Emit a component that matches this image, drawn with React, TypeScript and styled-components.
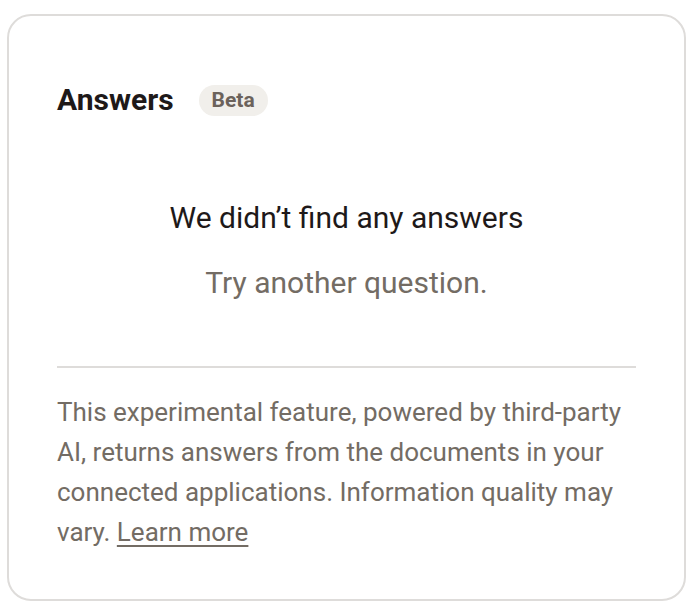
import React from "react";
import styled, { createGlobalStyle } from "styled-components";

const Global = createGlobalStyle`
  html, body { margin: 0; padding: 0; background: #fff; }
  body { font-family: Roboto, "Liberation Sans", sans-serif; -webkit-font-smoothing: antialiased; }
  * { box-sizing: border-box; }
`;

const Page = styled.div`
  padding: 14px 10px 1px 7px;
`;

const Card = styled.section`
  width: 679px;
  height: 587px;
  border: 2px solid #dedcda;
  border-radius: 24px;
  padding: 66px 48px 0 48px;
  display: flex;
  flex-direction: column;
`;

const Header = styled.div`
  display: flex;
  align-items: center;
  gap: 25px;
`;

const Title = styled.h2`
  margin: 0;
  font-size: 30px;
  font-weight: 700;
  color: #1e1919;
  line-height: 36px;
`;

const Badge = styled.span`
  display: inline-flex;
  align-items: center;
  height: 31px;
  padding: 0 13px;
  border-radius: 16px;
  background: #f1efeb;
  color: #6b625b;
  font-size: 21px;
  font-weight: 700;
`;

const Empty = styled.div`
  display: flex;
  flex-direction: column;
  align-items: center;
  margin-top: 82px;
  gap: 29px;
`;

const EmptyTitle = styled.div`
  font-size: 30px;
  color: #1e1919;
  line-height: 36px;
`;

const EmptySub = styled.div`
  font-size: 30px;
  color: #736c64;
  line-height: 36px;
`;

const Divider = styled.hr`
  margin: 65px 0 0 0;
  border: none;
  border-top: 2px solid #dedcda;
`;

const Note = styled.p`
  margin: 24px 0 0 0;
  font-size: 26px;
  line-height: 40px;
  color: #736c64;
`;

const Link = styled.a`
  color: #736c64;
  text-decoration: underline;
  text-decoration-thickness: 2px;
  text-underline-offset: 4px;
`;

export default function App() {
  return (
    <>
      <Global />
      <Page>
        <Card>
          <Header>
            <Title>Answers</Title>
            <Badge>Beta</Badge>
          </Header>
          <Empty>
            <EmptyTitle>We didn’t find any answers</EmptyTitle>
            <EmptySub>Try another question.</EmptySub>
          </Empty>
          <Divider />
          <Note>
            This experimental feature, powered by third-party AI, returns answers from the documents in your
            connected applications. Information quality may vary. <Link href="#">Learn more</Link>
          </Note>
        </Card>
      </Page>
    </>
  );
}
